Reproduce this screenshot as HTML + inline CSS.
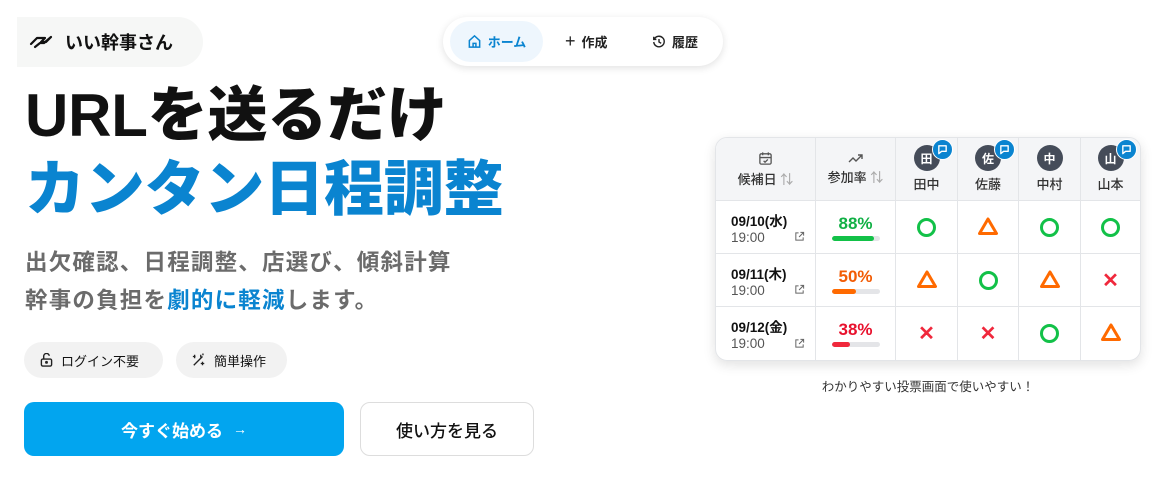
<!DOCTYPE html>
<html><head><meta charset="utf-8"><style>
*{margin:0;padding:0;box-sizing:border-box}
body{width:1165px;height:485px;background:#fff;font-family:"Liberation Sans","Noto Sans CJK JP",sans-serif;position:relative;overflow:hidden;color:#111}
.abs{position:absolute}
.logo{left:17px;top:17px;width:186px;height:50px;background:#f6f7f6;border-radius:0 25px 25px 0;display:flex;align-items:center;padding-left:12px;font-weight:700;font-size:18px}
.nav{left:443px;top:17px;width:280px;height:49px;background:#fff;border-radius:25px;box-shadow:0 2px 8px rgba(0,0,0,.12);font-size:13px;font-weight:700}
.nav div{position:absolute;top:4px;height:41px;display:flex;align-items:center;gap:6px}
h1{position:absolute;left:25px;font-weight:900;font-size:60px;letter-spacing:-0.2px;line-height:1}
.sub{left:25px;top:244px;font-size:22.5px;font-weight:700;color:#6b6b6b;line-height:38px;letter-spacing:1.2px}
.tag{top:342px;height:36px;background:#f2f2f2;border-radius:18px;display:flex;align-items:center;gap:8px;font-size:13px;padding-left:16px}
.btn{top:402px;height:54px;border-radius:10px;display:flex;align-items:center;justify-content:center;font-size:17px;font-weight:700}
table{position:absolute;left:715px;top:137px;width:426px;border-collapse:separate;border-spacing:0;border:1px solid #e3e5e8;border-radius:12px;box-shadow:0 4px 12px rgba(0,0,0,.12);overflow:hidden;font-size:13px}
th{background:#f4f5f7;height:63px;font-weight:500;color:#333;border-right:1px solid #e3e5e8;border-bottom:1px solid #e3e5e8;vertical-align:middle;position:relative}
td{height:53px;border-right:1px solid #e3e5e8;border-bottom:1px solid #e3e5e8;text-align:center;vertical-align:middle;position:relative}
tr:last-child td{border-bottom:none}
th:last-child,td:last-child{border-right:none}
.av{width:26px;height:26px;border-radius:50%;background:#454c59;color:#fff;font-size:12px;font-weight:700;display:flex;align-items:center;justify-content:center;margin:0 auto 3px}
.bub{position:absolute;top:1px;width:21px;height:21px;border-radius:50%;background:#0a84d0;border:1.5px solid #fff;display:flex;align-items:center;justify-content:center}
.dt{text-align:left;padding-left:15px}
.dt b{display:block;font-size:13.5px}
.dt span{color:#555;font-size:13.5px}
.ext{position:absolute;right:10px;bottom:11px}
.pct{font-size:17px;font-weight:700;line-height:20px}
.bar{width:48px;height:5px;border-radius:3px;background:#e4e5e8;margin:2px auto 0;overflow:hidden}
.bar i{display:block;height:100%;border-radius:3px}
.o{display:inline-block;width:19px;height:19px;border:3px solid #12c148;border-radius:50%;vertical-align:middle}
.x{color:#f0283c;font-size:20px;font-weight:900}
</style></head><body>
<div class="abs logo"><svg width="26" height="20" viewBox="0 0 26 20" fill="none" stroke="#111" stroke-width="2.2" stroke-linejoin="round" stroke-linecap="round"><path d="M2 12l6-6h8l-4 4h5l5-5M6 15l5-4h4l7-6"/></svg><span style="margin-left:10px">いい幹事さん</span></div>
<div class="abs nav">
<div style="left:7px;width:93px;background:#eef6fd;border-radius:21px;justify-content:center;color:#0a84d0"><svg width="15" height="15" viewBox="0 0 16 16" fill="none" stroke="#0a84d0" stroke-width="1.6"><path d="M2.5 7L8 2l5.5 5v7h-11z"/><path d="M6.5 14v-4h3v4"/></svg>ホーム</div>
<div style="left:122px;color:#222"><span style="font-size:18px;font-weight:400">+</span>作成</div>
<div style="left:209px;color:#222"><svg width="14" height="14" viewBox="0 0 16 16" fill="none" stroke="#222" stroke-width="1.6"><path d="M2.5 5A6 6 0 1 1 2 8"/><path d="M2 2v3h3M8 4.5V8l2.5 1.5"/></svg>履歴</div>
</div>
<h1 style="top:86px">URLを送るだけ</h1>
<h1 style="top:160px;color:#0a84d0">カンタン日程調整</h1>
<div class="abs sub">出欠確認、日程調整、店選び、傾斜計算<br>幹事の負担を<span style="color:#0a84d0">劇的に軽減</span>します。</div>
<div class="abs tag" style="left:24px;width:139px"><svg width="13" height="14" viewBox="0 0 14 15" fill="none" stroke="#222" stroke-width="1.5"><rect x="1.5" y="6.5" width="11" height="7.5" rx="1.5"/><path d="M4 6.5V4a3 3 0 0 1 6-1"/><circle cx="7" cy="10" r=".8" fill="#222"/></svg>ログイン不要</div>
<div class="abs tag" style="left:176px;width:111px"><svg width="14" height="14" viewBox="0 0 16 16" fill="none" stroke="#222" stroke-width="1.5"><path d="M2 14L12 4M10 2v3M12.5 0.5v2M1 4h3M3 2v4M12 10v4M10 12h4"/></svg>簡単操作</div>
<div class="abs btn" style="left:24px;width:320px;background:#02a5ef;color:#fff">今すぐ始める <span style="font-size:14px;margin-left:10px">→</span></div>
<div class="abs btn" style="left:360px;width:174px;border:1px solid #ddd;background:#fff;color:#111;font-weight:500">使い方を見る</div>
<svg width="0" height="0" style="position:absolute"><defs><symbol id="tri" viewBox="0 0 22 20"><path d="M11 3L19.5 17.5H2.5Z" fill="none" stroke="#ff6a00" stroke-width="3" stroke-linejoin="round"/></symbol><symbol id="ex" viewBox="0 0 12 12"><path d="M5 2H2v8h8V7M7 1.5h3.5V5M10.5 1.5L5.5 6.5" fill="none" stroke="#666" stroke-width="1.1"/></symbol><symbol id="bb" viewBox="0 0 12 12"><path d="M2 2h8v6H5L2 10.5z" fill="none" stroke="#fff" stroke-width="1.5" stroke-linejoin="round"/></symbol></defs></svg>
<table>
<tr>
<th style="width:100px"><svg width="15" height="15" viewBox="0 0 16 16" fill="none" stroke="#555" stroke-width="1.4"><rect x="2" y="3" width="12" height="11" rx="1.5"/><path d="M5 1.5v3M11 1.5v3M2 7h12M6 10.5l1.5 1.5 3-3"/></svg><br>候補日 <span style="color:#aaa">⇅</span></th>
<th style="width:80px"><svg width="16" height="12" viewBox="0 0 16 12" fill="none" stroke="#555" stroke-width="1.4"><path d="M1 10l4-4 3 3 6-6M10 3h4v4"/></svg><br>参加率 <span style="color:#aaa">⇅</span></th>
<th style="width:62px"><div class="av">田</div>田中<div class="bub" style="left:36px"><svg width="11" height="11"><use href="#bb"/></svg></div></th>
<th style="width:61px"><div class="av">佐</div>佐藤<div class="bub" style="left:36px"><svg width="11" height="11"><use href="#bb"/></svg></div></th>
<th style="width:62px"><div class="av">中</div>中村</th>
<th><div class="av">山</div>山本<div class="bub" style="left:35px"><svg width="11" height="11"><use href="#bb"/></svg></div></th>
</tr>
<tr><td class="dt"><b>09/10(水)</b><span>19:00</span><svg class="ext" width="11" height="11"><use href="#ex"/></svg></td><td><div class="pct" style="color:#11b045">88%</div><div class="bar"><i style="width:88%;background:#12c148"></i></div></td><td><span class="o"></span></td><td><svg width="22" height="20"><use href="#tri"/></svg></td><td><span class="o"></span></td><td><span class="o"></span></td></tr>
<tr><td class="dt"><b>09/11(木)</b><span>19:00</span><svg class="ext" width="11" height="11"><use href="#ex"/></svg></td><td><div class="pct" style="color:#f25c05">50%</div><div class="bar"><i style="width:50%;background:#ff6a00"></i></div></td><td><svg width="22" height="20"><use href="#tri"/></svg></td><td><span class="o"></span></td><td><svg width="22" height="20"><use href="#tri"/></svg></td><td><span class="x">✕</span></td></tr>
<tr><td class="dt"><b>09/12(金)</b><span>19:00</span><svg class="ext" width="11" height="11"><use href="#ex"/></svg></td><td><div class="pct" style="color:#e8112d">38%</div><div class="bar"><i style="width:38%;background:#f0283c"></i></div></td><td><span class="x">✕</span></td><td><span class="x">✕</span></td><td><span class="o"></span></td><td><svg width="22" height="20"><use href="#tri"/></svg></td></tr>
</table>
<div class="abs" style="left:715px;width:426px;top:376px;text-align:center;font-size:12.5px;color:#333">わかりやすい投票画面で使いやすい！</div>
</body></html>
